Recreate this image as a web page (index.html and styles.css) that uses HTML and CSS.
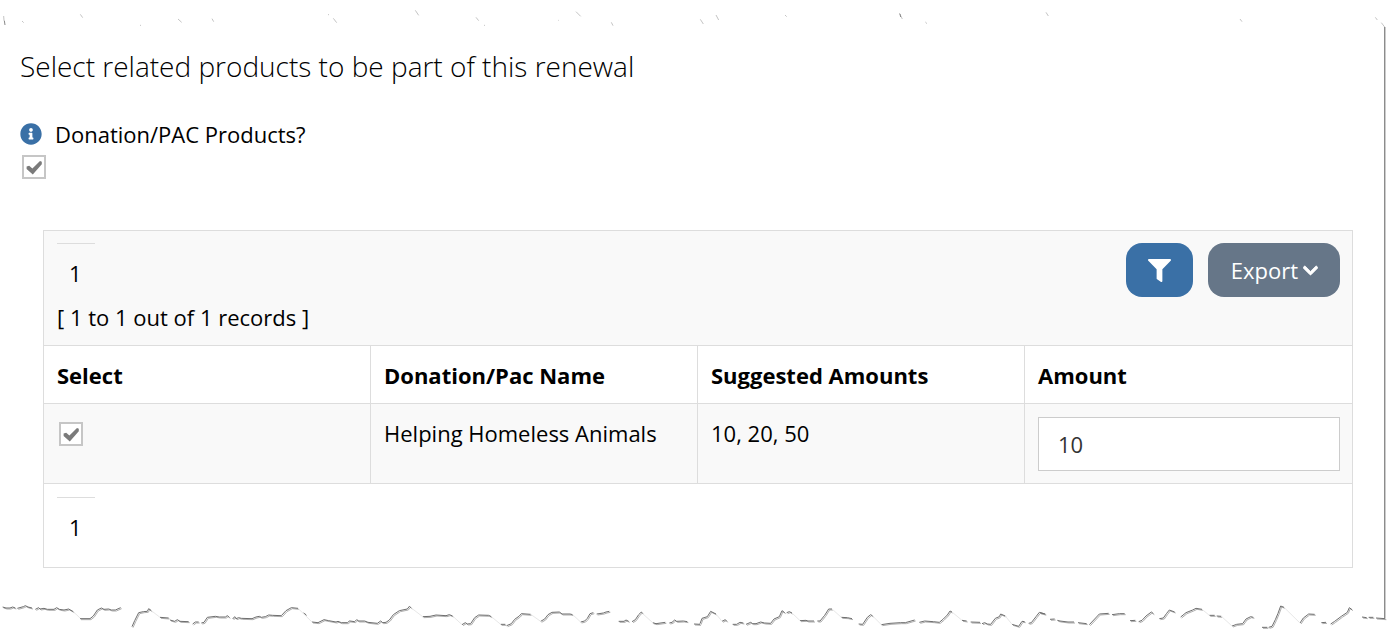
FILE: index.html
```html
<!DOCTYPE html>
<html lang="en">
<head>
  <meta charset="UTF-8">
  <meta name="viewport" content="width=device-width, initial-scale=1.0">
  <title>Renewal - Related Products</title>
  <link rel="stylesheet" href="styles.css">
</head>
<body>
  <!-- torn paper top edge -->
  <svg class="tear tear-top" viewBox="0 0 4170 81" preserveAspectRatio="none" aria-hidden="true">
    <path class="faint" d="M11 48L12 62M66 63L71 68M241 43L248 53M420 76h3M534 57L545 67M636 56L641 65M984 44h3M1000 55L1010 68"/>
    <path class="faint" d="M1246 31L1256 46M1428 52L1436 62M1452 76h3M1675 61h2M1728 35L1742 49M1834 67L1839 77"/>
    <path class="faint" d="M2101 58L2110 72M2148 45L2156 60M2355 45L2360 50M2698 39L2707 57M2776 66L2781 71M3138 37L3145 48M3720 57L3726 65M4126 52L4132 60M4144 68L4154 81"/>
    <path class="dark" d="M13 62L15 75M2700 42L2702 51"/>
  </svg>

  <main class="panel">
    <h1 class="title">Select related products to be part of this renewal</h1>

    <div class="question">
      <svg class="info-icon" viewBox="0 0 512 512" aria-hidden="true"><path d="M256 8C119.043 8 8 119.083 8 256c0 136.997 111.043 248 248 248s248-111.003 248-248C504 119.083 392.957 8 256 8zm0 110c23.196 0 42 18.804 42 42s-18.804 42-42 42-42-18.804-42-42 18.804-42 42-42zm56 254c0 6.627-5.373 12-12 12h-88c-6.627 0-12-5.373-12-12v-24c0-6.627 5.373-12 12-12h12v-64h-12c-6.627 0-12-5.373-12-12v-24c0-6.627 5.373-12 12-12h64c6.627 0 12 5.373 12 12v100h12c6.627 0 12 5.373 12 12v24z"/></svg>
      <label for="donation">Donation/PAC Products?</label>
    </div>
    <input type="checkbox" class="check" id="donation" checked>

    <div class="grid">
      <div class="grid-top">
        <div>
          <div class="pager"><span class="page">1</span></div>
          <div>[ 1 to 1 out of 1 records ]</div>
        </div>
        <div class="actions">
          <button type="button" class="btn btn-filter" aria-label="Filter">
            <svg viewBox="0 0 512 512" aria-hidden="true"><path d="M487.976 0H24.028C2.71 0-8.047 25.866 7.058 40.971L192 225.941V432c0 7.831 3.821 15.17 10.237 19.662l80 55.98C298.02 518.69 320 507.493 320 487.98V225.941l184.947-184.97C520.021 25.896 509.338 0 487.976 0z"/></svg>
          </button>
          <button type="button" class="btn btn-export">Export
            <svg viewBox="0 0 448 512" aria-hidden="true"><path d="M207.029 381.476L12.686 187.132c-9.373-9.373-9.373-24.569 0-33.941l22.667-22.667c9.357-9.357 24.522-9.375 33.901-.04L224 284.505l154.745-154.021c9.379-9.335 24.544-9.317 33.901.04l22.667 22.667c9.373 9.373 9.373 24.569 0 33.941L240.971 381.476c-9.373 9.372-24.569 9.372-33.942 0z"/></svg>
          </button>
        </div>
      </div>

      <table>
        <thead>
          <tr>
            <th>Select</th>
            <th class="col-name">Donation/Pac Name</th>
            <th>Suggested Amounts</th>
            <th>Amount</th>
          </tr>
        </thead>
        <tbody>
          <tr>
            <td><input type="checkbox" class="check" aria-label="Select Helping Homeless Animals" checked></td>
            <td>Helping Homeless Animals</td>
            <td>10, 20, 50</td>
            <td><input type="text" class="amount" aria-label="Amount" value="10"></td>
          </tr>
        </tbody>
      </table>

      <div class="grid-bottom">
        <div class="pager"><span class="page">1</span></div>
      </div>
    </div>
  </main>

  <!-- torn paper bottom edge -->
  <svg class="tear tear-bottom" viewBox="0 30 4170 120" preserveAspectRatio="none" aria-hidden="true">
    <g id="tear-line">
      <path d="M8 51L18 54 30 54 38 51 46 54M52 55L70 50 76 47 84 51 96 54M106 58L116 53 120 57 132 55 142 58 162 58 170 53 178 58 192 60 206 57 220 65M240 86L270 86 280 78 292 60 304 54 312 58 326 57 334 60 346 60 362 53M396 110L404 92 416 68 430 65 442 64 446 56 454 62M480 82L506 84M510 90L524 94 532 89 540 94 566 95M578 102L586 96 596 96M604 99L612 97 622 82 646 79 658 81 676 81 682 77 688 82M698 87L704 80 708 86 716 83 724 85 756 86 768 81 778 79 784 82 796 80 806 75 818 76 844 77 858 62 874 53 894 55M910 69L918 74M936 96L954 98 972 89 986 92 1008 96 1014 94 1024 98 1042 98 1050 92"/>
      <path transform="translate(1050)" d="M0 93L14 95 20 89 26 93 44 93 54 97 82 100 92 93 98 98 108 97 118 90 130 74 148 62 172 57 178 49 184 54M218 80L240 79 258 75 288 77 298 74 308 78M336 104L346 98 352 102 362 101 374 83 386 75 416 76 424 80M452 103L466 103M470 107L484 101 494 88 508 78 514 71 542 73M572 94L584 87 594 74 606 67 628 66 636 72 660 72 668 74M692 96L704 93 712 85 720 71 730 68M740 72L760 69 768 66 778 64M806 94L822 94 828 90 836 94M846 95L856 89 866 74 874 66 878 71M908 98L918 101 946 97M958 99L966 97 974 90 980 94 1000 93 1012 95M1032 102L1050 103"/>
      <path transform="translate(2100)" d="M0 101L6 85 22 80 32 64 48 72M66 94L76 89 80 94M98 103L110 103 120 97 130 99M138 103L152 97 158 101 168 101 182 96 194 99 212 100 222 87 238 80 246 62 254 68M260 68L268 65 276 69M300 92L318 91 324 93 342 93M352 93L360 93 374 76 386 57 396 57M424 82L442 83 456 86M476 102L488 103 502 82 512 74 518 78M544 104L570 100 602 98 616 98 644 90M658 97L674 93 700 95 718 97 730 87 742 75 750 63 756 66M786 91L800 93M812 96L840 97M846 101L854 98 862 102 872 103 886 85 898 80 902 72 916 78M936 103L956 109 966 94 974 95M986 100L994 98 1008 80 1018 67 1036 72"/>
      <path transform="translate(3120)" d="M0 68L14 72M30 88L44 87M52 91L60 93 84 96 102 96M114 98L140 101M148 104L164 87 178 72 206 70M216 74L238 71 254 71M270 92L286 91M296 95L306 91 318 78 334 66 340 71M358 86L370 84 380 70 388 60 404 66M422 81L438 68 458 60 468 55 486 58M508 76L524 76M530 78L544 79M576 108L590 103 608 101 618 87 632 80 640 82M666 112L682 112M686 112L696 109 706 89 714 70 722 48 732 52M780 99L790 84 806 72 824 73M844 98L858 97M872 102L884 94 904 79 922 67 928 53 936 59M966 81L980 83M986 82L1000 82M1008 84L1036 86"/>
    </g>
    <use href="#tear-line" class="shade" transform="translate(3 3)"/>
    <!-- hairlines joining the pieces -->
    <path class="hair" d="M220 65L240 84M454 62L480 82M894 55L936 96M1234 54L1268 80M1358 78L1386 104M1474 80L1502 103M1592 73L1622 94M1718 74L1742 96M1928 71L1958 98M2148 72L2166 94M2376 69L2400 92M2496 57L2524 82M2618 78L2644 104M2856 66L2886 91M3016 78L3036 103M3606 58L3628 76M3664 79L3696 108M3852 52L3900 99"/>
  </svg>
</body>
</html>
```
FILE: styles.css
```css
* {
  box-sizing: border-box;
}
body {
  margin: 0;
  background: #fff;
  color: #000;
  font-family: 'Open Sans', sans-serif;
  font-size: 22px;
  line-height: 32px;
}

/* torn edges */
.tear {
  display: block;
  width: 100%;
  fill: none;
}
.tear path {
  vector-effect: non-scaling-stroke;
}
.tear-top {
  height: 27px;
}
.tear-top .faint { stroke: #c4c4c4; }
.tear-top .dark { stroke: #888; }
.tear-bottom {
  height: 40px;
  margin-top: -18px;
  stroke: #6e6e6e;
}
.tear-bottom .shade {
  opacity: 0.55;
}
.tear-bottom .hair {
  stroke: #e8e8e8;
}

.panel {
  margin-right: 5px;
  padding: 19px 31px 50px 20px;
  border-right: 1px solid #8c8c8c;
  box-shadow: 1px 0 0 #ccc;
}
.title {
  margin: 0 0 32px;
  font-size: 28px;
  font-weight: 300;
  line-height: 40px;
}
.question {
  display: flex;
  align-items: center;
  gap: 13px;
}
.info-icon {
  width: 22px;
  height: 22px;
  fill: #3a70a6;
}

.check {
  display: block;
  position: relative;
  appearance: none;
  width: 24px;
  height: 24px;
  margin: 5px 2px;
  border: 2px solid #c6c6c6;
  background: #fff;
}
.check:checked::before {
  content: "";
  position: absolute;
  inset: 0;
  background: #7a7a7a;
  clip-path: polygon(13% 48%, 26% 44%, 42% 58%, 80% 20%, 89% 24%, 89% 36%, 44% 87%, 13% 60%);
}

.grid {
  margin: 51px 0 0 23px;
  border: 1px solid #ddd;
}
.grid-top {
  display: flex;
  justify-content: space-between;
  padding: 12px 12px 12px 13px;
  background: #f9f9f9;
}
.grid-bottom {
  padding: 13px 13px 12px;
  border-top: 1px solid #ddd;
}
.pager {
  display: flex;
}
.page {
  padding: 13px 13px 12px 12px;
  border-top: 1px solid #ddd;
}
.actions {
  display: flex;
  align-items: flex-start;
  gap: 15px;
}
.btn {
  display: flex;
  align-items: center;
  gap: 5px;
  height: 54px;
  padding: 0 22px;
  border: none;
  border-radius: 16px;
  color: #fff;
  font: inherit;
  cursor: pointer;
}
.btn svg {
  fill: #fff;
}
.btn-filter { background: #3a70a6; }
.btn-filter svg { width: 23px; height: 23px; }
.btn-export {
  padding-left: 23px;
  background: #667688;
}
.btn-export svg {
  width: 15px;
  height: 17px;
  stroke: #fff;
  stroke-width: 24px;
}

table {
  width: 100%;
  table-layout: fixed;
  border-collapse: separate;
  border-spacing: 0;
}
th, td {
  padding: 13px 12px 12px 13px;
  border-top: 1px solid #ddd;
  border-right: 1px solid #ddd;
  text-align: left;
  vertical-align: top;
}
th:last-child, td:last-child {
  border-right: none;
}
th {
  width: 25%;
}
.col-name {
  width: calc(25% + 1px);
}
td {
  background: #f9f9f9;
}
.amount {
  display: block;
  width: 100%;
  height: 54px;
  padding: 0 19px;
  border: 1px solid #ccc;
  border-radius: 0;
  background: #fff;
  color: #333;
  font: inherit;
}
```
